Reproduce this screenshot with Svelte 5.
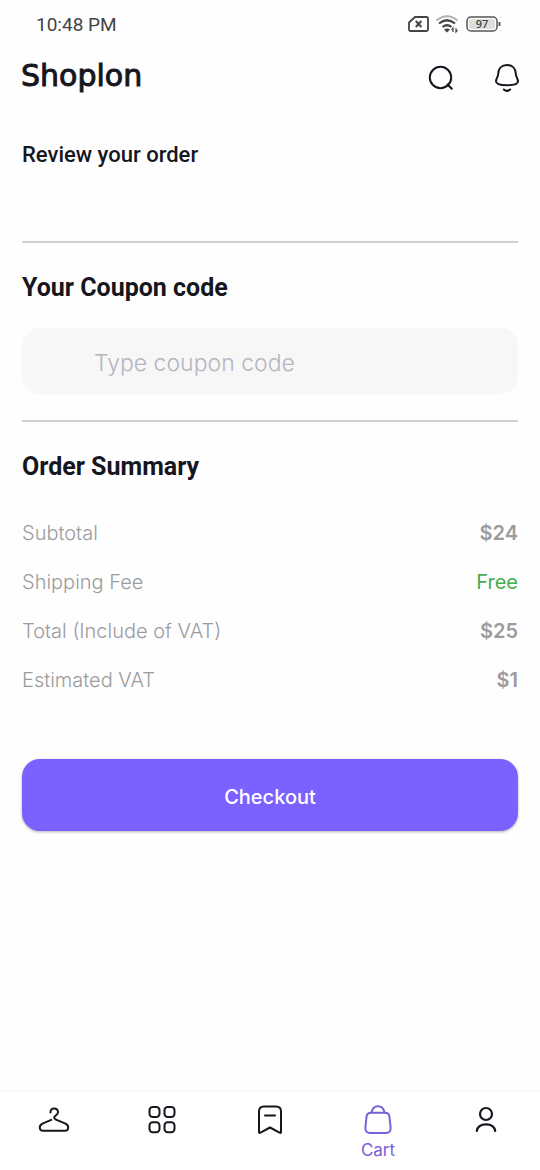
<script>
  const rows = [
    { label: 'Subtotal', value: '$24' },
    { label: 'Shipping Fee', value: 'Free', free: true },
    { label: 'Total (Include of VAT)', value: '$25' },
    { label: 'Estimated VAT', value: '$1' }
  ];
  let coupon = $state('');
</script>

<div class="screen">
  <div class="status">
    <span class="time">10:48 PM</span>
    <div class="indicators">
      <svg width="22" height="18" viewBox="0 0 22 18" fill="none" stroke="#444446" stroke-width="1.8" stroke-linejoin="round">
        <path d="M7 2h11.5a1.5 1.5 0 0 1 1.5 1.5v11a1.5 1.5 0 0 1-1.5 1.5h-16A1.5 1.5 0 0 1 1 14.5V7.500z" />
        <path d="M7.800 6l5.600 6M13.400 6l-5.600 6" stroke-width="2" />
      </svg>
      <svg width="24" height="20" viewBox="0 0 24 20" fill="none" stroke="#444446" stroke-width="2.200">
        <path d="M.5 6.500Q11-2 21.500 6.500" stroke="#b2b2b4" stroke-width="2" />
        <path d="M3 9.500Q11 3 19 9.500M6.500 13Q11 9.500 15.500 13" />
        <path d="M8 15.500Q11 13.500 14 15.500L11 18.500z" fill="#444446" stroke="none" />
        <path d="M17 18v-4l-1.500 2M20 14v4l1.500-2" stroke-width="1.200" />
      </svg>
      <svg width="36" height="18" viewBox="0 0 36 18" role="img" aria-label="Battery">
        <rect x="1" y="2" width="30" height="14" rx="4" fill="#fff" stroke="#555557" stroke-width="1.500" />
        <rect x="3" y="4" width="26" height="10" rx="2" fill="#dededf" />
        <path d="M33.500 7v4" stroke="#555557" stroke-width="2" />
        <text x="16" y="13" text-anchor="middle" font-family="Open Sans, sans-serif" font-size="11" font-weight="600" fill="#444446">97</text>
      </svg>
    </div>
  </div>

  <header>
    <a class="logo" href="#home">Shoplon</a>
    <div class="actions">
      <button aria-label="Search">
        <svg width="28" height="28" viewBox="0 0 28 28" fill="none" stroke="#16161e" stroke-width="2" stroke-linecap="round">
          <circle cx="13.500" cy="13.500" r="10.700" /><path d="M20.500 20.500l4.300 4.300" />
        </svg>
      </button>
      <button aria-label="Notifications">
        <svg width="28" height="30" viewBox="0 0 28 30" fill="none" stroke="#16161e" stroke-width="2" stroke-linecap="round" stroke-linejoin="round">
          <path d="M14 2C8.500 2 5.500 5.700 5.300 10.300C5.200 14 3 15.500 3 18.200C3 21.600 8 22.200 14 22.200S25 21.600 25 18.200C25 15.500 22.800 14 22.700 10.300C22.500 5.700 19.500 2 14 2z" />
          <path d="M10.800 26.500q3.200 2.800 6.400 0" />
        </svg>
      </button>
    </div>
  </header>

  <main>
    <h1>Review your order</h1>
    <section class="coupon">
      <h2><label for="coupon">Your Coupon code</label></h2>
      <input id="coupon" type="text" placeholder="Type coupon code" bind:value={coupon} />
    </section>
    <section class="summary">
      <h2>Order Summary</h2>
      <dl>
        {#each rows as row}
          <div class="row">
            <dt>{row.label}</dt>
            <dd class:free={row.free}>{row.value}</dd>
          </div>
        {/each}
      </dl>
    </section>
    <button class="checkout">Checkout</button>
  </main>

  <nav>
    <a href="#shop" aria-label="Shop">
      <svg width="32" height="32" viewBox="0 0 32 32" fill="none" stroke="#16161e" stroke-width="2" stroke-linecap="round" stroke-linejoin="round">
        <path d="M12.500 8.500C12.300 5.700 14 4.500 16 4.500C18.500 4.500 20 6.200 20 8.200C20 11.500 16.200 11.200 16.200 13.800C16.200 15 17.500 15.400 18.500 15.800L27.500 19.700C31.800 22 30.500 26.800 27 26.800H5C1.500 26.800.2 22 4.500 19.700L13.200 15.800" />
      </svg>
    </a>
    <a href="#categories" aria-label="Categories">
      <svg width="32" height="32" viewBox="0 0 32 32" fill="none" stroke="#16161e" stroke-width="2">
        <rect x="3.500" y="3" width="10" height="10" rx="3.200" /><rect x="18.500" y="3" width="10" height="10" rx="3.200" />
        <rect x="3.500" y="18.200" width="10" height="10" rx="3.200" /><rect x="18.500" y="18.200" width="10" height="10" rx="3.200" />
      </svg>
    </a>
    <a href="#saved" aria-label="Saved">
      <svg width="32" height="32" viewBox="0 0 32 32" fill="none" stroke="#16161e" stroke-width="2" stroke-linecap="round" stroke-linejoin="round">
        <path d="M5 7.500Q5 2.500 10 2.500H22Q27 2.500 27 7.500V28Q27 29.500 25.500 28.700L16 23.500L6.500 28.700Q5 29.500 5 28z" />
        <path d="M11 11.500h10" />
      </svg>
    </a>
    <a href="#cart" class="active" aria-current="page">
      <svg width="32" height="32" viewBox="0 0 32 32" fill="none" stroke="#7760da" stroke-width="2" stroke-linecap="round">
        <path d="M9 8.800H23Q27 8.800 27.500 12.800L28.600 23.500Q29.200 29 23.500 29H8.500Q2.800 29 3.400 23.500L4.500 12.800Q5 8.800 9 8.800z" />
        <path d="M9.500 8.500C10.300 4.500 12.300 2.300 16 2.300S21.700 4.500 22.500 8.500" />
      </svg>
      <span>Cart</span>
    </a>
    <a href="#profile" aria-label="Profile">
      <svg width="32" height="32" viewBox="0 0 32 32" fill="none" stroke="#16161e" stroke-width="2.200" stroke-linecap="round">
        <circle cx="16" cy="10" r="6" />
        <path d="M6.800 27C7.500 22 10.500 20.300 16 20.300S24.500 22 25.200 27" />
      </svg>
    </a>
  </nav>
</div>

<style>
  :global(body) { margin: 0; background: #fff; }
  .screen {
    min-height: 100vh;
    display: flex;
    flex-direction: column;
    background: #fefefe;
    color: #16161e;
    font-family: "Inter", sans-serif;
  }
  button { border: 0; background: none; padding: 0; font-family: inherit; cursor: pointer; }
  a { color: inherit; text-decoration: none; }
  svg { display: block; }
  .status {
    height: 50px;
    padding: 0 38px 0 36px;
    display: flex;
    align-items: center;
    justify-content: space-between;
    box-sizing: border-box;
  }
  .time { font: 400 19px/24px Roboto, sans-serif; color: #444446; }
  .indicators { display: flex; align-items: center; gap: 6px; padding-bottom: 2px; }
  header {
    height: 56px;
    padding: 0 19px 0 21px;
    display: flex;
    align-items: center;
    justify-content: space-between;
  }
  .logo {
    font: 400 30px/32px "DejaVu Sans", sans-serif;
    padding-bottom: 4px;
    -webkit-text-stroke: 1px currentColor;
  }
  .actions { display: flex; align-items: center; gap: 38px; }
  main { flex: 1; padding: 35px 22px 32px; }
  h1, h2, dl, dd { margin: 0; }
  h1 { font: 500 22px/28px Roboto, sans-serif; }
  h2 { font: 700 25px/32px Roboto, sans-serif; }
  section { border-top: 2px solid #d0d0d3; }
  .coupon { margin-top: 72px; padding: 29px 0 26px; }
  input {
    display: block;
    width: 100%;
    height: 66px;
    margin-top: 24px;
    padding: 4px 72px 0;
    box-sizing: border-box;
    border: 0;
    border-radius: 18px;
    background: #f7f7f8;
    color: #16161e;
    font: 300 23px/32px "Inter", sans-serif;
  }
  input::placeholder { color: #b5b5bf; opacity: 1; }
  .summary { padding-top: 29px; }
  dl { display: grid; gap: 21px; margin-top: 36px; }
  .row { display: flex; justify-content: space-between; font-size: 20px; line-height: 28px; color: #9b9b9e; }
  dt { font-weight: 300; }
  dd { font-weight: 600; }
  dd.free { color: #46ad4b; font-weight: 400; }
  .checkout {
    display: block;
    width: 100%;
    height: 72px;
    margin-top: 65px;
    padding-top: 4px;
    border-radius: 18px;
    background: #7b61ff;
    box-shadow: 0 1px 3px #0000004d;
    color: #fff;
    font-size: 20px;
    font-weight: 500;
    line-height: 28px;
  }
  nav {
    height: 80px;
    display: grid;
    grid-template-columns: repeat(5, 1fr);
    border-top: 2px solid #fafafb;
    background: #fff;
    box-sizing: border-box;
  }
  nav a { display: flex; flex-direction: column; align-items: center; gap: 2px; padding-top: 12px; }
  .active { color: #7760da; font-size: 17px; line-height: 24px; }
</style>
